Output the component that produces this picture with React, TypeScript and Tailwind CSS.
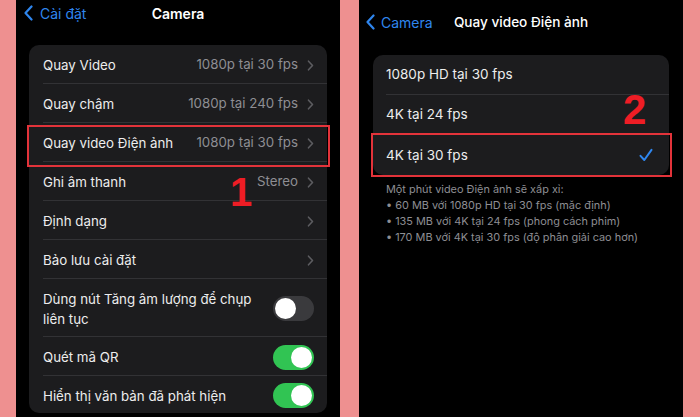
import { ReactNode } from "react"

const FONT = { fontFamily: "Inter, 'Noto Sans', 'Liberation Sans', sans-serif" }

function Chevron() {
  return (
    <svg width="7" height="11" viewBox="0 0 7 11" className="ml-[9px] shrink-0">
      <path d="M1.5 1.2l4 4.3-4 4.3" fill="none" stroke="#5c5c60" strokeWidth="1.6" strokeLinecap="round" strokeLinejoin="round" />
    </svg>
  )
}

function BackChevron() {
  return (
    <svg width="11" height="16" viewBox="0 0 11 16" className="shrink-0">
      <path d="M8.5 1.5L2.5 8l6 6.5" fill="none" stroke="#2f86ee" strokeWidth="2.2" strokeLinecap="round" strokeLinejoin="round" />
    </svg>
  )
}

function Toggle({ on }: { on: boolean }) {
  return (
    <div
      className={`flex h-[25px] w-[41px] shrink-0 items-center rounded-full p-[2px] ${
        on ? "justify-end bg-[#31c453]" : "justify-start bg-[#3a3a3d]"
      }`}
    >
      <div className="h-[21px] w-[21px] rounded-full bg-white" />
    </div>
  )
}

function Row({
  label,
  value,
  chevron = false,
  toggle,
  last = false,
  height = "h-[39px]",
  highlight = false,
}: {
  label: ReactNode
  value?: string
  chevron?: boolean
  toggle?: boolean
  last?: boolean
  height?: string
  highlight?: boolean
}) {
  return (
    <div className={`relative flex ${height} items-stretch pl-[14px]`}>
      <div
        className={`flex flex-1 items-center pr-[13px] pt-[2px] ${last ? "" : "border-b border-[#323235]"}`}
      >
        <div className="flex-1 text-[13.3px] leading-[20px] text-[#ededed]">{label}</div>
        {value && <span className="text-[13.3px] text-[#8e8e93]">{value}</span>}
        {chevron && <Chevron />}
        {toggle !== undefined && <Toggle on={toggle} />}
      </div>
      {highlight && (
        <span className="absolute -left-[2px] -right-[3px] top-[2px] -bottom-[5px] border-2 border-[#e3333a]" />
      )}
    </div>
  )
}

function LeftPhone() {
  return (
    <div className="relative h-[417px] w-[324px] overflow-hidden bg-black">
      <div className="grid h-[26px] grid-cols-[1fr_auto_1fr] items-center">
        <div className="flex items-center gap-[6px] pl-[7px]">
          <BackChevron />
          <span className="text-[14px] text-[#2f86ee]">Cài đặt</span>
        </div>
        <span className="text-[14px] font-semibold text-white">Camera</span>
        <div />
      </div>

      <div className="mx-[13px] mt-[19px] rounded-[10px] bg-[#1c1c1e]">
        <Row label="Quay Video" value="1080p tại 30 fps" chevron />
        <Row label="Quay chậm" value="1080p tại 240 fps" chevron />
        <Row label="Quay video Điện ảnh" value="1080p tại 30 fps" chevron highlight />
        <Row label="Ghi âm thanh" value="Stereo" chevron />
        <Row label="Định dạng" chevron />
        <Row label="Bảo lưu cài đặt" chevron />
        <Row
          label={
            <>
              Dùng nút Tăng âm lượng để chụp
              <br />
              liên tục
            </>
          }
          toggle={false}
          height="h-[58px]"
        />
        <Row label="Quét mã QR" toggle />
        <Row label="Hiển thị văn bản đã phát hiện" toggle last height="h-[37px]" />
      </div>

      <span
        className="absolute left-[214px] top-[172px] text-[40px] font-bold leading-none text-[#ee1d25]"
        style={{ fontFamily: "'Liberation Sans', Arial, sans-serif" }}
      >
        1
      </span>
    </div>
  )
}

function OptionRow({ label, checked = false, last = false, highlight = false }: { label: string; checked?: boolean; last?: boolean; highlight?: boolean }) {
  return (
    <div className="relative flex h-[40px] items-stretch pl-[13px]">
      <div className={`flex flex-1 items-center pr-[16px] ${last ? "" : "border-b border-[#323235]"}`}>
        <span className="flex-1 text-[13.5px] text-[#ededed]">{label}</span>
        {checked && (
          <svg width="14" height="14" viewBox="0 0 14 14">
            <path d="M1.5 7.8l3.8 4.2L12.5 1.8" fill="none" stroke="#2f86ee" strokeWidth="2" strokeLinecap="round" strokeLinejoin="round" />
          </svg>
        )}
      </div>
      {highlight && (
        <span className="absolute -left-[2px] -right-[3px] -top-[2px] -bottom-[2px] border-2 border-[#e3333a]" />
      )}
    </div>
  )
}

function RightPhone() {
  return (
    <div className="relative h-[417px] w-[324px] overflow-hidden bg-black">
      <div className="grid h-[44px] grid-cols-[1fr_auto_1fr] items-center">
        <div className="flex items-center gap-[5px] pl-[6px]">
          <BackChevron />
          <span className="text-[14px] text-[#2f86ee]">Camera</span>
        </div>
        <span className="text-[13.6px] font-medium text-white">Quay video Điện ảnh</span>
        <div />
      </div>

      <div className="mx-[14px] mt-[11px] rounded-[10px] bg-[#1c1c1e]">
        <OptionRow label="1080p HD tại 30 fps" />
        <OptionRow label="4K tại 24 fps" />
        <OptionRow label="4K tại 30 fps" checked last highlight />
      </div>

      <div className="mt-[6px] pl-[27px] text-[10.9px] leading-[16px] text-[#8e8e93]">
        <p>Một phút video Điện ảnh sẽ xấp xỉ:</p>
        <p>• 60 MB với 1080p HD tại 30 fps (mặc định)</p>
        <p>• 135 MB với 4K tại 24 fps (phong cách phim)</p>
        <p>• 170 MB với 4K tại 30 fps (độ phân giải cao hơn)</p>
      </div>

      <span
        className="absolute left-[264px] top-[89px] text-[42px] font-bold leading-none text-[#ee1d25]"
        style={{ fontFamily: "'Liberation Sans', Arial, sans-serif" }}
      >
        2
      </span>
    </div>
  )
}

export default function App() {
  return (
    <div className="flex h-[417px] w-[700px] gap-[19px] bg-[#ee9090] pl-4" style={FONT}>
      <LeftPhone />
      <RightPhone />
    </div>
  )
}
